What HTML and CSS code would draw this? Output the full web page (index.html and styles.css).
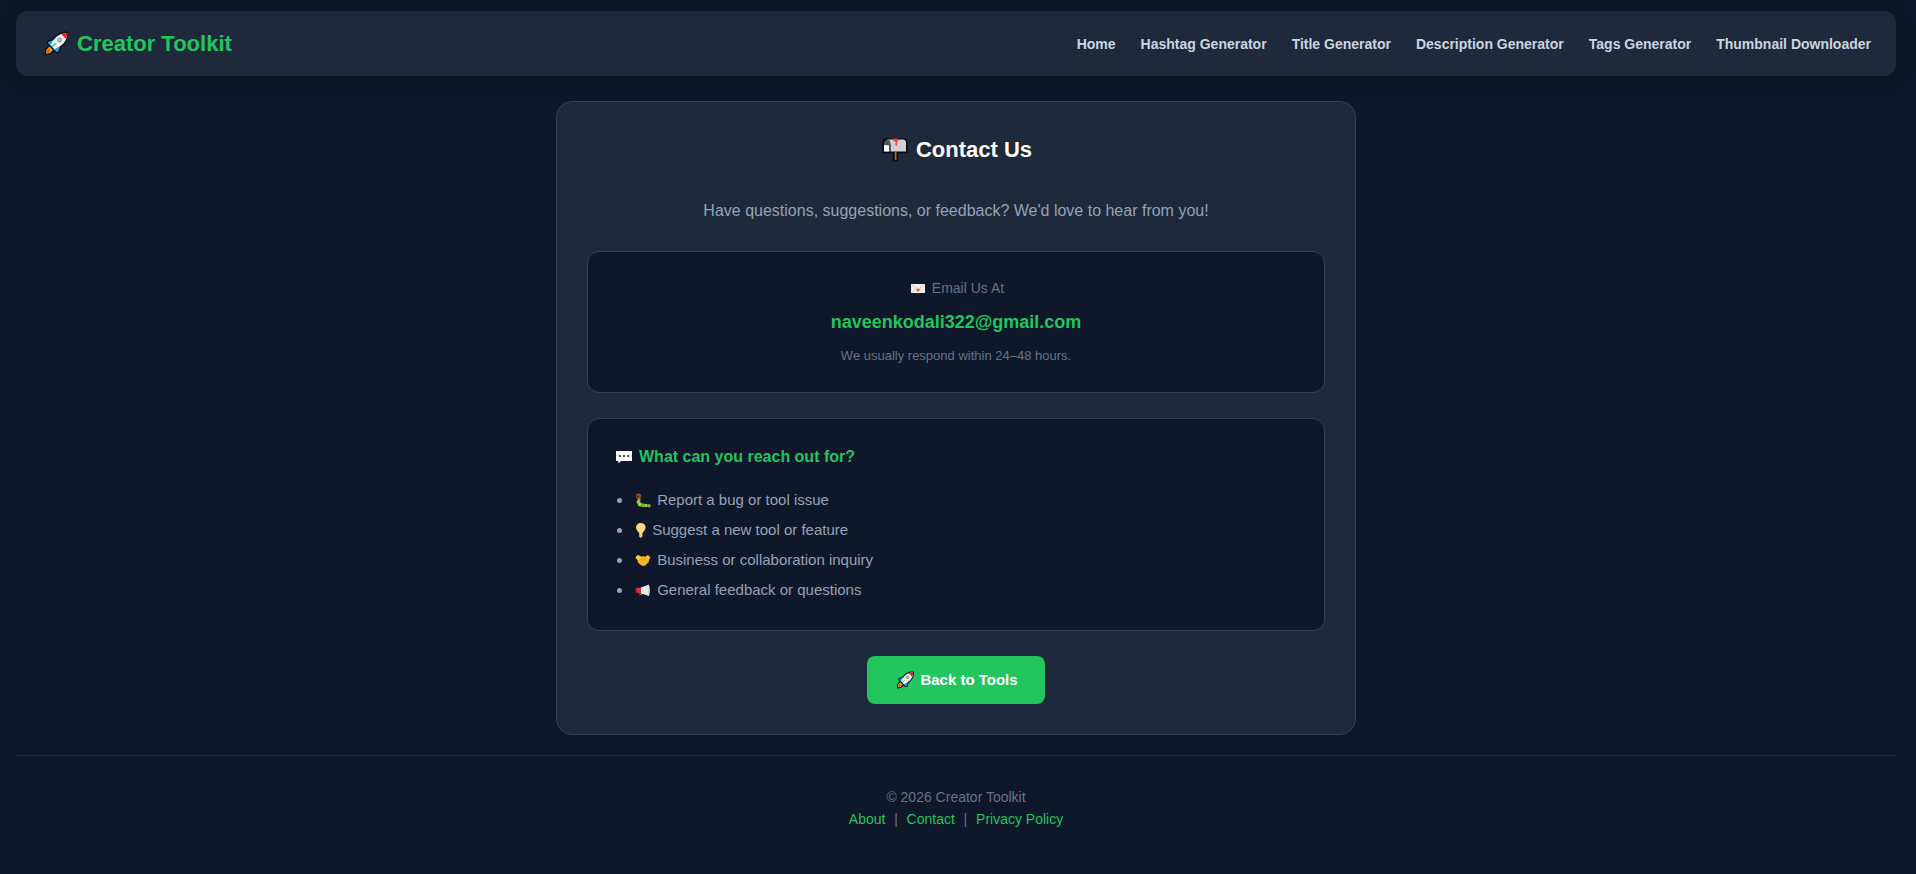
FILE: index.html
```html
<!DOCTYPE html>
<html lang="en">

<head>
  <meta charset="UTF-8">
  <meta name="viewport" content="width=device-width, initial-scale=1.0">
  <title>Contact Us - Creator Toolkit</title>
  <link rel="stylesheet" href="styles.css">
</head>

<body>
  <!-- rocket is used in the logo and in the button -->
  <svg class="sprite" aria-hidden="true">
    <symbol id="rocket" viewBox="0 0 30 25">
      <path d="M26.500 1.500C21 1 15.500 4 12.500 8.500L7 10.500 6.500 12.500 8.500 14.500 5 18.500 4.500 23.500 9.500 22.500 13 19.500 15.500 21.500 18 21 19.500 15.500C24 12.500 27 7.500 26.500 1.500Z" fill="#0b0d12" stroke="#0b0d12" stroke-width="1.600" stroke-linejoin="round" />
      <path d="M12.500 9 7.200 11 7 12.500 10 15Z" fill="#1ba1e8" />
      <path d="M19 15.500 17.500 20.500 15.500 21 12.500 18Z" fill="#1ba1e8" />
      <path d="M8.500 15.500 5.500 18.500 5 23 9.200 22 12 19Z" fill="#f7941e" />
      <path d="M7.500 18 5.500 22.500 9 20.500Z" fill="#a85b20" />
      <path d="M26.200 2C19.500 2 13.500 5.500 9.500 14L13.300 18.300C22 14.500 26.500 9.500 26.200 2Z" fill="#f1f3f5" />
      <path d="M26.200 2C24 2 22 2.400 20.300 3.200L25.100 8C26 6.200 26.400 4.400 26.200 2Z" fill="#e01f3d" />
      <circle cx="18.500" cy="9" r="2.400" fill="#8a9097" />
      <circle cx="18.500" cy="9" r="1.400" fill="#c3cad0" />
      <path d="M10.800 16 15 12.300" stroke="#35b8b0" stroke-width="1.200" />
    </symbol>
  </svg>

  <nav class="navbar">
    <div class="logo">
      <svg class="emoji-lg" aria-hidden="true"><use href="#rocket" /></svg>
      <span>Creator Toolkit</span>
    </div>
    <div class="nav-links">
      <a href="#">Home</a>
      <a href="#">Hashtag Generator</a>
      <a href="#">Title Generator</a>
      <a href="#">Description Generator</a>
      <a href="#">Tags Generator</a>
      <a href="#">Thumbnail Downloader</a>
    </div>
  </nav>

  <main class="container">
    <h1>
      <svg class="emoji-lg" viewBox="0 0 30 25" aria-hidden="true">
        <path d="M6 2H23C25.500 2 27 3.500 27 6V15.500H17.500V23.500H13.500V15.500H3V6C3 3.500 4 2 6 2Z" fill="#0b0d12" stroke="#0b0d12" stroke-width="1.500" stroke-linejoin="round" />
        <path d="M7 2.500H23C25 2.500 26 4 26 6V14.500H10.500V7.500Z" fill="#d0d1d6" />
        <path d="M4 14.500V7C4 4 5.500 2.500 7.500 2.500S10.500 4 10.500 7V14.500Z" fill="#50545d" />
        <path d="M4 8 9 8.500V14.500H4Z" fill="#fff" />
        <path d="M13.500 1.500H18V4.500H17V8.500H15.500V4.500H13.500Z" fill="#ec4134" />
        <path d="M14.800 14.500H16.500V23H14.800Z" fill="#b9672e" />
      </svg>
      <span>Contact Us</span>
    </h1>
    <p class="intro">Have questions, suggestions, or feedback? We'd love to hear from you!</p>

    <section class="box email-box">
      <p class="label">
        <svg class="emoji-sm" viewBox="0 0 20 16" aria-hidden="true">
          <path d="M3 4H17V13H3Z" fill="#f3eeee" />
          <path d="M3 4.500 10 9 17 4.500M3 13 8 8.500M17 13 12 8.500" fill="none" stroke="#d2cccf" stroke-width=".8" />
          <path d="M10 12 8.200 10.300C7.900 8.800 9.300 8.400 10 9.300 10.700 8.400 12.100 8.800 11.800 10.300Z" fill="#e8604c" />
        </svg>
        <span>Email Us At</span>
      </p>
      <a class="email" href="mailto:naveenkodali322@gmail.com">naveenkodali322@gmail.com</a>
      <p class="note">We usually respond within 24–48 hours.</p>
    </section>

    <section class="box">
      <h2>
        <svg class="emoji-md" viewBox="0 0 22 18" aria-hidden="true">
          <path d="M3 3H19V13H8L5.500 15.500V13H3Z" fill="#fff" />
          <circle cx="7" cy="8" r="1" fill="#15181f" />
          <circle cx="11" cy="8" r="1" fill="#15181f" />
          <circle cx="15" cy="8" r="1" fill="#15181f" />
        </svg>
        <span>What can you reach out for?</span>
      </h2>
      <ul>
        <li>
          <svg class="emoji-sm" viewBox="0 0 20 16" aria-hidden="true">
            <circle cx="5.500" cy="3" r="2.600" fill="#c8391d" />
            <circle cx="4.800" cy="3.400" r=".9" fill="#3a130c" />
            <circle cx="6" cy="6.600" r="1.700" fill="#6fa82c" />
            <circle cx="5.500" cy="9" r="2" fill="#91c73d" />
            <circle cx="7" cy="11.500" r="2.100" fill="#a3d14a" />
            <circle cx="10" cy="12.300" r="2" fill="#7eb530" />
            <circle cx="13" cy="12.500" r="1.800" fill="#a0d046" />
            <circle cx="16" cy="12.700" r="1.800" fill="#79ad2c" />
          </svg>
          <span>Report a bug or tool issue</span>
        </li>
        <li>
          <svg class="emoji-narrow" viewBox="0 0 15 16" aria-hidden="true">
            <path d="M7.800 0C5 0 3 2 3 4.600 3 7.200 5.600 8.500 6.200 10.500H9.400C10 8.500 12.600 7.200 12.600 4.600 12.600 2 10.600 0 7.800 0Z" fill="#ffd98a" />
            <path d="M6.200 10H9.400V13.500L7.800 15 6.200 13.500Z" fill="#e8cd9e" />
            <path d="M6.500 5 7.800 6.500 9.100 5M7.800 6.500V10" fill="none" stroke="#fbc976" stroke-width=".7" />
          </svg>
          <span>Suggest a new tool or feature</span>
        </li>
        <li>
          <svg class="emoji-sm" viewBox="0 0 20 16" aria-hidden="true">
            <path d="M2.500 4.500 5 2 8.500 3.800 10 3 12 3.800 15 2 17.500 4.500 16 7 15.500 9.500 11.500 13 8.500 12.500 5 9.500 4.500 7Z" fill="#f6b526" />
            <path d="M2.500 4.500 5 2 8 4 4.500 7Z" fill="#ffd04a" />
            <path d="M9.500 4.500 8.500 7 10.500 7 12 6 14.500 9M10 9.500 12 11.500" fill="none" stroke="#d38c1a" stroke-width=".6" />
          </svg>
          <span>Business or collaboration inquiry</span>
        </li>
        <li>
          <svg class="emoji-sm" viewBox="0 0 20 16" aria-hidden="true">
            <path d="M3 5 8 4.500V10.500L3 9.500Z" fill="#e32d35" />
            <path d="M2 5.500H3.500V9.500H2Z" fill="#7d171c" />
            <path d="M8 4.500 16 1.500V13L8 10.500Z" fill="#e9eaed" />
            <path d="M15.500 1.700C17.500 3.500 17.500 11 15.500 12.900Z" fill="#bfc3ca" />
            <path d="M6 10.200 9.500 11.200 8.500 12.200H6.500Z" fill="#62666e" />
          </svg>
          <span>General feedback or questions</span>
        </li>
      </ul>
    </section>

    <a class="btn" href="#">
      <svg class="emoji-md" aria-hidden="true"><use href="#rocket" /></svg>
      <span>Back to Tools</span>
    </a>
  </main>

  <footer>
    <p>© 2026 Creator Toolkit</p>
    <p>
      <a href="#">About</a> &nbsp;|&nbsp;
      <a href="#">Contact</a> &nbsp;|&nbsp;
      <a href="#">Privacy Policy</a>
    </p>
  </footer>
</body>

</html>
```
FILE: styles.css
```css
* {
  box-sizing: border-box;
  margin: 0;
  padding: 0;
}

body {
  padding: 11px 20px 0 16px;
  background: #0f172a;
  color: #94a3b8;
  font-family: "Liberation Sans", Arial, sans-serif;
}

a {
  color: #22c55e;
  text-decoration: none;
}

.sprite {
  display: none;
}

/* navbar */
.navbar {
  display: flex;
  justify-content: space-between;
  align-items: center;
  flex-wrap: wrap;
  padding: 20px 25px;
  background: #1e293b;
  border-radius: 12px;
  box-shadow: 0 4px 20px rgba(0, 0, 0, 0.3);
}

.logo {
  display: flex;
  align-items: center;
  gap: 6px;
  font-size: 22px;
  line-height: 25px;
  font-weight: bold;
  color: #22c55e;
}

.nav-links {
  display: flex;
  flex-wrap: wrap;
  gap: 25px;
}

.nav-links a {
  color: #cbd5e1;
  font-size: 14px;
  font-weight: bold;
}

/* icons */
.emoji-lg {
  width: 30px;
  height: 25px;
}

.emoji-md {
  width: 22px;
  height: 18px;
}

.emoji-sm {
  width: 20px;
  height: 16px;
}

.emoji-narrow {
  width: 15px;
  height: 16px;
}

/* contact card */
.container {
  max-width: 800px;
  margin: 25px auto 20px;
  padding: 30px;
  background: #1e293b;
  border: 1px solid #334155;
  border-radius: 16px;
  text-align: center;
}

h1 {
  display: flex;
  justify-content: center;
  align-items: center;
  gap: 6px;
  color: #fff;
  font-size: 22px;
  line-height: 35px;
}

.intro {
  margin: 31px 0 27px;
  font-size: 16px;
  line-height: 26px;
}

.box {
  margin-bottom: 25px;
  padding: 25px;
  background: #0f172a;
  border: 1px solid #334155;
  border-radius: 12px;
  text-align: left;
}

.email-box {
  text-align: center;
}

.label {
  display: flex;
  justify-content: center;
  align-items: center;
  gap: 4px;
  color: #64748b;
  font-size: 14px;
  line-height: 22px;
}

.email {
  display: block;
  margin: 8px 0;
  font-size: 18px;
  line-height: 30px;
  font-weight: bold;
}

.note {
  color: #64748b;
  font-size: 13px;
  line-height: 22px;
}

h2 {
  display: flex;
  align-items: center;
  gap: 4px;
  margin-bottom: 15px;
  color: #22c55e;
  font-size: 16px;
  line-height: 26px;
}

ul {
  padding-left: 20px;
  font-size: 15px;
  line-height: 30px;
}

li svg {
  vertical-align: middle;
}

.btn {
  display: inline-flex;
  align-items: center;
  gap: 4px;
  padding: 12px 27px;
  background: #22c55e;
  border-radius: 8px;
  color: #fff;
  font-size: 15px;
  line-height: 24px;
  font-weight: bold;
  vertical-align: top;
}

/* footer */
footer {
  padding: 30px 0;
  border-top: 1px solid #1e293b;
  color: #64748b;
  font-size: 14px;
  line-height: 22px;
  text-align: center;
}

footer a {
  margin: 0 1px;
}
```
